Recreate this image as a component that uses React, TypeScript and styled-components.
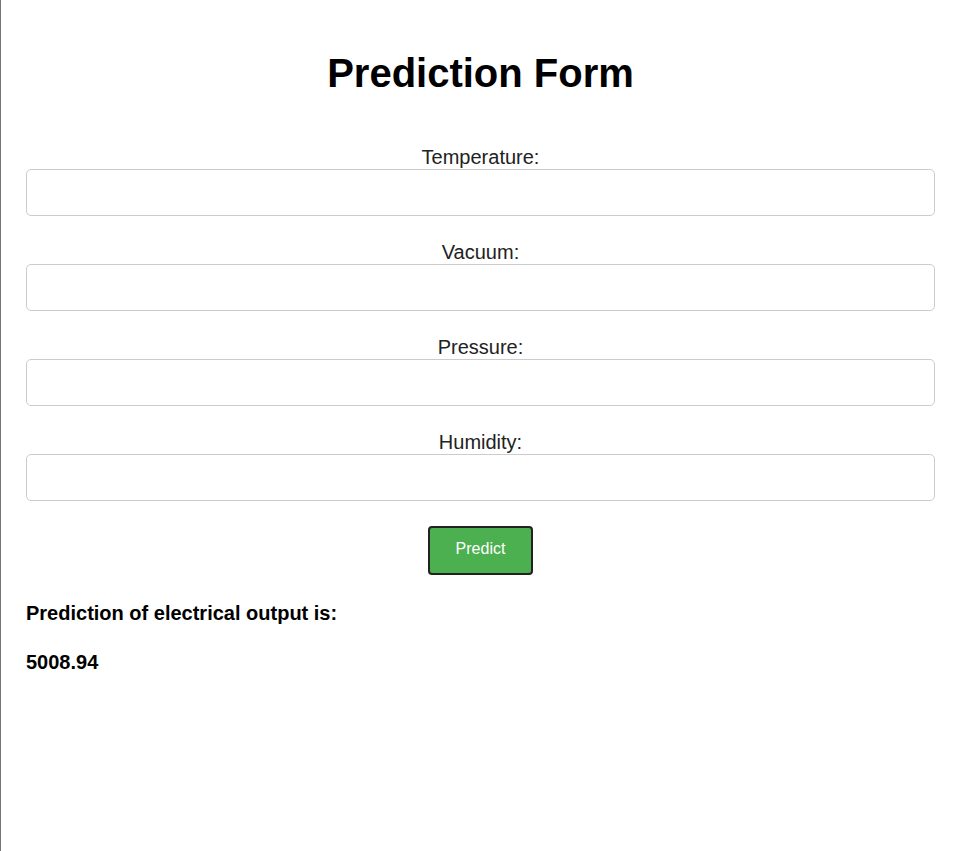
import React, { useState } from "react";
import styled, { createGlobalStyle } from "styled-components";

const GlobalStyle = createGlobalStyle`
  html, body {
    margin: 0;
    padding: 0;
    background: #ffffff;
  }
  body {
    font-family: "Liberation Sans", Arial, sans-serif;
  }
`;

const fields = ["Temperature", "Vacuum", "Pressure", "Humidity"];

const App: React.FC = () => {
  const [values, setValues] = useState<Record<string, string>>({});
  const [result] = useState<string>("5008.94");

  return (
    <Page>
      <GlobalStyle />
      <Title>Prediction Form</Title>
      <Form onSubmit={(e) => e.preventDefault()}>
        {fields.map((name) => (
          <Group key={name}>
            <Label htmlFor={name}>{name}:</Label>
            <Input
              id={name}
              type="text"
              value={values[name] ?? ""}
              onChange={(e) => setValues({ ...values, [name]: e.target.value })}
            />
          </Group>
        ))}
        <ButtonRow>
          <PredictButton type="submit">Predict</PredictButton>
        </ButtonRow>
      </Form>

      {/* 결과 */}
      <Result>Prediction of electrical output is:</Result>
      <Result>{result}</Result>
    </Page>
  );
};

const Page = styled.div`
  min-height: 100vh;
  box-sizing: border-box;
  border-left: 1px solid #767676;
  padding: 50px 23px 0 25px;
`;

const Title = styled.h1`
  margin: 0;
  font-size: 40px;
  line-height: 46px;
  font-weight: 700;
  color: #000000;
  text-align: center;
`;

const Form = styled.form`
  margin-top: 50px;
  display: flex;
  flex-direction: column;
`;

const Group = styled.div`
  display: flex;
  flex-direction: column;
  margin-bottom: 25px;
`;

const Label = styled.label`
  display: block;
  font-size: 20px;
  line-height: 23px;
  color: #222222;
  text-align: center;
`;

const Input = styled.input`
  width: 100%;
  height: 47px;
  box-sizing: border-box;
  border: 1px solid #cccccc;
  border-radius: 5px;
  padding: 0 12px;
  font-size: 16px;
  font-family: inherit;
  outline: none;
`;

const ButtonRow = styled.div`
  display: flex;
  justify-content: center;
`;

const PredictButton = styled.button`
  width: 105px;
  height: 49px;
  box-sizing: border-box;
  padding: 0 0 3px;
  background-color: #4caf50;
  color: #ffffff;
  border: 2px solid #222222;
  border-radius: 4px;
  font-size: 16px;
  font-family: inherit;
  cursor: pointer;
`;

const Result = styled.p`
  margin: 27px 0 0;
  font-size: 20px;
  line-height: 23px;
  font-weight: 700;
  color: #000000;

  & + & {
    margin-top: 26px;
  }
`;

export default App;
